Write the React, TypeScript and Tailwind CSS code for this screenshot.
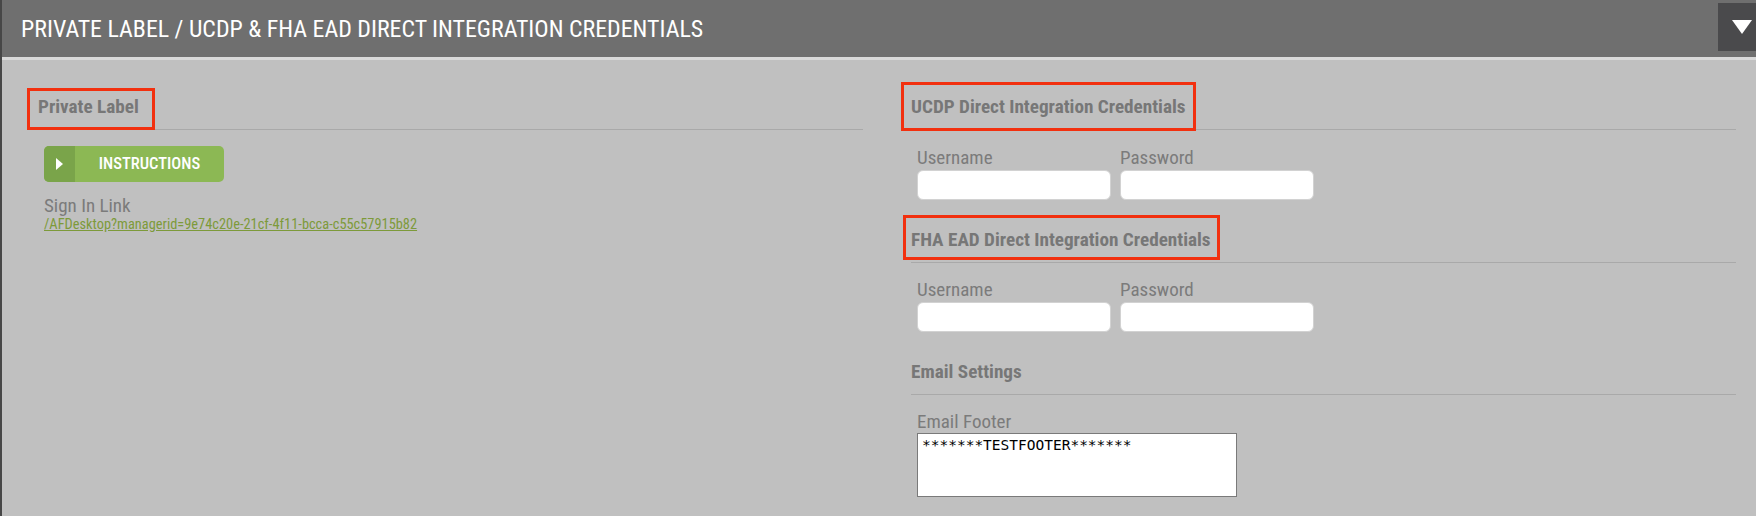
import React from "react";

const COND = "font-['Roboto_Condensed','Liberation_Sans_Narrow','DejaVu_Sans_Condensed',sans-serif]";

function RedBox({ cls }: { cls: string }) {
  return <span className={`pointer-events-none absolute border-[3px] border-[#f2300f] ${cls}`} />;
}

function Heading({ text, box, className = "" }: { text: string; box: string; className?: string }) {
  return (
    <div className={`border-b border-[#a9a9a9] pb-[9px] ${className}`}>
      <span className="relative inline-block text-[19.2px] leading-[24px] font-bold text-[#777777]">
        {text}
        <RedBox cls={box} />
      </span>
    </div>
  );
}

function Field({ label }: { label: string }) {
  return (
    <div className="flex w-[194px] flex-col">
      <span className="text-[19px] leading-[22px] text-[#7b7b7b]">{label}</span>
      <input
        className="mt-px h-[30px] w-[194px] rounded-[6px] border border-[#d2d2d2] bg-white outline-none"
        type={label === "Password" ? "password" : "text"}
      />
    </div>
  );
}

export default function App() {
  return (
    <div className={`h-[516px] w-[1756px] overflow-hidden border-l-2 border-[#474747] bg-[#c0c0c0] ${COND}`}>
      <div className="flex h-[57px] items-start justify-between bg-[#6f6f6f]">
        <h1 className="self-center pl-[19px] text-[23.9px] leading-[30px] text-white">
          PRIVATE LABEL / UCDP &amp; FHA EAD DIRECT INTEGRATION CREDENTIALS
        </h1>
        <div className="mt-[3px] flex h-[48px] w-[38px] items-center bg-[#4a4a4c] pl-[14px]">
          <svg width="20" height="14" viewBox="0 0 20 14">
            <polygon points="0,0 20,0 10,14" fill="#ffffff" />
          </svg>
        </div>
      </div>
      <div className="h-[3px] bg-[#d9d9d9]" />
      <div className="flex gap-[48px] pl-[36px] pr-[20px] pt-[35px]">
        <div className="flex w-[825px] flex-col">
          <Heading text="Private Label" box="-left-[11px] -top-[7px] -right-[16px] -bottom-[11px]" />
          <div className="flex flex-col pl-[6px]">
            <button className="mt-[16px] flex h-[36px] w-[180px] overflow-hidden rounded-[5px] bg-[#8cb854]">
              <span className="flex h-full w-[31px] items-center justify-center bg-[#7aa44a]">
                <svg width="7" height="12" viewBox="0 0 7 12">
                  <polygon points="0,0 7,6 0,12" fill="#ffffff" />
                </svg>
              </span>
              <span className="flex flex-1 items-center justify-center text-[16.5px] font-medium text-white">
                INSTRUCTIONS
              </span>
            </button>
            <span className="mt-[13px] text-[19px] leading-[21px] text-[#7b7b7b]">Sign In Link</span>
            <a className="text-[14.4px] leading-[18px] text-[#7d9a3a] underline" href="#">
              /AFDesktop?managerid=9e74c20e-21cf-4f11-bcca-c55c57915b82
            </a>
          </div>
        </div>
        <div className="flex w-[825px] flex-col">
          <Heading text="UCDP Direct Integration Credentials" box="-left-[10px] -top-[13px] -right-[10px] -bottom-[12px]" />
          <div className="mt-[17px] flex gap-[9px] pl-[6px]">
            <Field label="Username" />
            <Field label="Password" />
          </div>
          <Heading
            text="FHA EAD Direct Integration Credentials"
            box="-left-[8px] -top-[13px] -right-[9px] -bottom-[8px]"
            className="mt-[28px]"
          />
          <div className="mt-[16px] flex gap-[9px] pl-[6px]">
            <Field label="Username" />
            <Field label="Password" />
          </div>
          <div className="mt-[28px] border-b border-[#a9a9a9] pb-[9px]">
            <span className="text-[19.2px] leading-[24px] font-bold text-[#777777]">Email Settings</span>
          </div>
          <div className="mt-[16px] flex flex-col pl-[6px]">
            <span className="text-[19px] leading-[22px] text-[#7b7b7b]">Email Footer</span>
            <div className="h-[64px] w-[320px] border border-[#7a7a7a] bg-white px-[4px] pt-[3px] font-['DejaVu_Sans_Mono',monospace] text-[14.5px] leading-[17px] text-black">
              *******TESTFOOTER*******
            </div>
          </div>
        </div>
      </div>
    </div>
  );
}
